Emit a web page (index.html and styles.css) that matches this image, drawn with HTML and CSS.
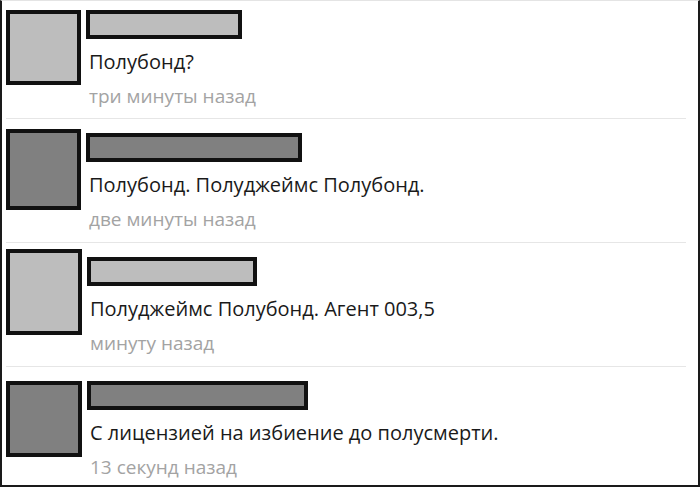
FILE: index.html
```html
<!DOCTYPE html>
<html lang="ru">
<head>
  <meta charset="UTF-8">
  <meta name="viewport" content="width=device-width, initial-scale=1.0">
  <title>Комментарии</title>
  <link rel="stylesheet" href="styles.css">
</head>
<body>
  <div class="wall">

    <div class="comment">
      <div class="avatar light"></div>
      <div class="body">
        <div class="name light" style="width: 156px"></div>
        <div class="text">Полубонд?</div>
        <div class="time">три минуты назад</div>
      </div>
    </div>

    <div class="comment">
      <div class="avatar dark tall"></div>
      <div class="body">
        <div class="name dark" style="width: 216px"></div>
        <div class="text">Полубонд. Полуджеймс Полубонд.</div>
        <div class="time">две минуты назад</div>
      </div>
    </div>

    <div class="comment">
      <div class="avatar light taller"></div>
      <div class="body">
        <div class="name light" style="width: 170px"></div>
        <div class="text">Полуджеймс Полубонд. Агент 003,5</div>
        <div class="time">минуту назад</div>
      </div>
    </div>

    <div class="comment">
      <div class="avatar dark"></div>
      <div class="body">
        <div class="name dark" style="width: 221px"></div>
        <div class="text">С лицензией на избиение до полусмерти.</div>
        <div class="time">13 секунд назад</div>
      </div>
    </div>

  </div>
</body>
</html>
```

FILE: styles.css
```css
body {
  margin: 0;
  background: #fff;
  font-family: "Open Sans", "Noto Sans", sans-serif;
}
.wall {
  width: 700px;
  height: 487px;
  box-sizing: border-box;
  border-left: 2px solid #1a1a1a;
  border-right: 2px solid #1a1a1a;
  border-bottom: 2px solid #1a1a1a;
  border-top: 1px solid #e4e4e4;
  padding-left: 4px;
  overflow: hidden;
}
.comment {
  display: flex;
  gap: 5px;
  padding: 14px 0 6px;
  margin-right: 12px;
  border-bottom: 1px solid #e6e6e6;
}
.comment:first-child {
  padding: 9px 0 5px;
}
.comment:last-child {
  border-bottom: none;
}
.avatar {
  width: 76px;
  height: 76px;
  box-sizing: border-box;
  border: 4px solid #111;
  flex-shrink: 0;
}
.comment:first-child .avatar {
  width: 75px;
  height: 75px;
}
.avatar.tall {
  width: 75px;
  height: 81px;
  margin-top: -4px;
}
.avatar.taller {
  height: 86px;
  margin-top: -8px;
}
.light {
  background: #bdbdbd;
}
.dark {
  background: #808080;
}
.name {
  height: 29px;
  box-sizing: border-box;
  border: 4px solid #111;
}
.text {
  margin-top: 6px;
  padding-left: 3px;
  font-size: 20px;
  line-height: 34px;
  color: #1a1a1a;
}
.time {
  padding-left: 3px;
  font-size: 19px;
  line-height: 34px;
  color: #a3a3a3;
}
```
